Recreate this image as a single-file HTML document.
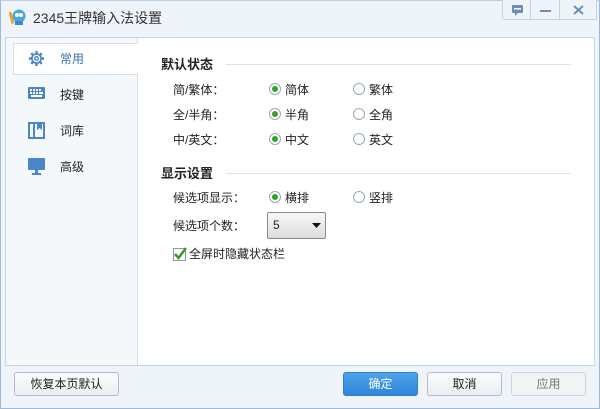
<!DOCTYPE html>
<html><head><meta charset="utf-8"><style>
*{margin:0;padding:0;box-sizing:border-box}
body{width:600px;height:409px;background:#eef4fa;font-family:"Liberation Sans","Noto Sans CJK SC",sans-serif;font-size:12px;color:#222;position:relative;overflow:hidden}
.win{position:absolute;left:0;top:0;width:600px;height:409px;border:1px solid #9cb9d8;border-top-color:#bcd0e4}
.abs{position:absolute}
.title{left:33px;top:8px;font-size:14px;color:#333}
.tb{top:0;height:20px;border:1px solid #c4d4e4;border-top:none;background:#eef4fa}
.panel{left:5px;top:37px;width:590px;height:329px;border:1px solid #c4d6e8;background:#fff}
.side{left:0;top:0;width:132px;height:327px;background:#f5f8fb;border-right:1px solid #d4e0ec}
.tab{left:7px;width:125px;height:32px;font-size:12px}
.sel{background:#fff;border:1px solid #d4e0ec;border-right:none;top:5px}
.h{font-weight:bold;font-size:13px}
.line{height:1px;background:#dde4ec}
.rad{width:12px;height:12px;border:1px solid #9aa8b8;border-radius:50%;background:#fff}
.rad.on::after{content:"";position:absolute;left:2px;top:2px;width:6px;height:6px;border-radius:50%;background:#3aa02a}
.btn{height:24px;border:1px solid #b0bccb;border-radius:3px;background:linear-gradient(#fdfdfd,#eaeef2);text-align:center;line-height:22px;font-size:12px}
</style></head><body>
<div class="win"></div>
<svg class="abs" style="left:9px;top:8px" width="18" height="18" viewBox="0 0 18 18"><circle cx="10" cy="8" r="6.5" fill="#4aa6dc"/><circle cx="8" cy="7" r="2" fill="#fff"/><circle cx="12" cy="7" r="2" fill="#fff"/><rect x="1" y="4" width="3" height="12" fill="#e7a531" transform="rotate(-15 2 10)"/><path d="M6 13h8v4H6z" fill="#3a8cc8"/></svg>
<div class="abs title">2345王牌输入法设置</div>
<div class="abs tb" style="left:502px;width:29px;border-radius:0 0 0 4px"><svg width="29" height="20"><rect x="9" y="5" width="11" height="8" rx="1" fill="#6d8fb2"/><path d="M12 13l0 3 3-3z" fill="#6d8fb2"/><rect x="11" y="8" width="7" height="1.5" fill="#fff"/></svg></div>
<div class="abs tb" style="left:530px;width:30px"><svg width="30" height="20"><rect x="9" y="10" width="11" height="2" fill="#6d8fb2"/></svg></div>
<div class="abs tb" style="left:559px;width:38px"><svg width="38" height="20"><path d="M14 6l9 8M23 6l-9 8" stroke="#6d8fb2" stroke-width="2"/></svg></div>
<div class="abs panel">
 <div class="abs side"></div>
 <div class="abs tab sel"></div>
 <svg class="abs" style="left:22px;top:12px" width="17" height="17" viewBox="0 0 17 17"><g stroke="#4a86c8" stroke-width="2.4" stroke-linecap="butt"><path d="M8.5 1v3M8.5 13v3M1 8.5h3M13 8.5h3M3.2 3.2l2.1 2.1M11.7 11.7l2.1 2.1M3.2 13.8l2.1-2.1M11.7 5.3l2.1-2.1"/></g><circle cx="8.5" cy="8.5" r="4.6" fill="#fff" stroke="#4a86c8" stroke-width="1.6"/><circle cx="8.5" cy="8.5" r="1.8" fill="none" stroke="#4a86c8" stroke-width="1.3"/></svg>
 <div class="abs" style="left:54px;top:12px;color:#3a6fb0">常用</div>
 <svg class="abs" style="left:22px;top:49px" width="17" height="13"><rect x="0" y="0" width="17" height="12" rx="1" fill="#4a86c8"/><g fill="#fff"><rect x="2" y="2" width="2" height="2"/><rect x="5" y="2" width="2" height="2"/><rect x="8" y="2" width="2" height="2"/><rect x="11" y="2" width="2" height="2"/><rect x="2" y="5" width="2" height="2"/><rect x="5" y="5" width="2" height="2"/><rect x="8" y="5" width="2" height="2"/><rect x="11" y="5" width="4" height="2"/><rect x="3" y="8" width="11" height="2"/></g></svg>
 <div class="abs" style="left:54px;top:48px">按键</div>
 <svg class="abs" style="left:22px;top:84px" width="17" height="17"><rect x="1" y="1" width="15" height="15" fill="none" stroke="#4a86c8" stroke-width="2"/><rect x="5" y="1" width="2" height="15" fill="#4a86c8"/><path d="M9 1h5v7l-2.5-2-2.5 2z" fill="#4a86c8"/></svg>
 <div class="abs" style="left:54px;top:84px">词库</div>
 <svg class="abs" style="left:22px;top:120px" width="17" height="17"><rect x="0" y="0" width="17" height="12" rx="1" fill="#4a86c8"/><rect x="7" y="12" width="3" height="3" fill="#4a86c8"/><rect x="4" y="15" width="9" height="2" fill="#4a86c8"/></svg>
 <div class="abs" style="left:54px;top:120px">高级</div>

 <div class="abs h" style="left:155px;top:16px">默认状态</div>
 <div class="abs line" style="left:220px;top:26px;width:345px"></div>
 <div class="abs" style="left:167px;top:43px">简/繁体：</div>
 <div class="abs rad on" style="left:263px;top:45px"></div><div class="abs" style="left:279px;top:43px">简体</div>
 <div class="abs rad" style="left:347px;top:45px"></div><div class="abs" style="left:363px;top:43px">繁体</div>
 <div class="abs" style="left:167px;top:68px">全/半角：</div>
 <div class="abs rad on" style="left:263px;top:70px"></div><div class="abs" style="left:279px;top:68px">半角</div>
 <div class="abs rad" style="left:347px;top:70px"></div><div class="abs" style="left:363px;top:68px">全角</div>
 <div class="abs" style="left:167px;top:93px">中/英文：</div>
 <div class="abs rad on" style="left:263px;top:95px"></div><div class="abs" style="left:279px;top:93px">中文</div>
 <div class="abs rad" style="left:347px;top:95px"></div><div class="abs" style="left:363px;top:93px">英文</div>

 <div class="abs h" style="left:155px;top:125px">显示设置</div>
 <div class="abs line" style="left:220px;top:135px;width:345px"></div>
 <div class="abs" style="left:167px;top:151px">候选项显示：</div>
 <div class="abs rad on" style="left:263px;top:153px"></div><div class="abs" style="left:279px;top:151px">横排</div>
 <div class="abs rad" style="left:347px;top:153px"></div><div class="abs" style="left:363px;top:151px">竖排</div>
 <div class="abs" style="left:167px;top:179px">候选项个数：</div>
 <div class="abs" style="left:261px;top:174px;width:59px;height:27px;border:1px solid #8a8a8a;border-radius:2px;background:linear-gradient(#f8f8f8,#dcdcdc)"><span class="abs" style="left:5px;top:5px">5</span><svg class="abs" style="left:44px;top:10px" width="9" height="6"><path d="M0 0h9L4.5 5z" fill="#111"/></svg></div>
 <svg class="abs" style="left:167px;top:209px" width="14" height="14"><rect x="0.5" y="1.5" width="12" height="12" fill="#fff" stroke="#8a9aaa"/><path d="M2 7l3.5 4L13 1" fill="none" stroke="#3a9a2a" stroke-width="2.5"/></svg>
 <div class="abs" style="left:183px;top:207px">全屏时隐藏状态栏</div>
</div>
<div class="abs btn" style="left:14px;top:372px;width:105px">恢复本页默认</div>
<div class="abs btn" style="left:343px;top:372px;width:75px;background:linear-gradient(#4ea2ea,#2f86dc);border-color:#2d7fd0;color:#fff">确定</div>
<div class="abs btn" style="left:427px;top:372px;width:75px">取消</div>
<div class="abs btn" style="left:511px;top:372px;width:75px;color:#777;background:#f2f4f6;border-color:#cdd4dc">应用</div>
</body></html>
